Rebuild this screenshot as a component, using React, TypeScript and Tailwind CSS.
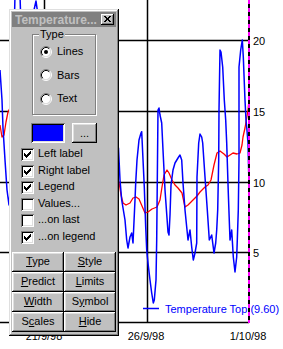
import React from "react";

const blue: [number, number][] = [
  [0, 70], [2, 100], [3, 128], [5, 160], [7, 190], [9, 205], [11, 180], [13, 80], [15, -5], [20, -5],
  [22, 60], [25, 150], [28, 200], [31, 120], [34, 10], [36, 1], [38, 15], [41, 120], [45, 230], [50, 260],
  [55, 200], [60, 120], [65, 160], [70, 240], [75, 280], [80, 230], [85, 150], [90, 100], [95, 140],
  [100, 210], [105, 260], [110, 230], [116, 175], [118.5, 148], [120, 180], [121.7, 200], [125, 220],
  [126.7, 240], [128, 248], [130, 237], [131.7, 233], [133, 243], [135, 200], [135.7, 183], [137, 160],
  [139, 140], [141, 133], [141.7, 131.7], [142.7, 153], [144.3, 187], [145.7, 227], [146.7, 250],
  [148, 263], [150, 280], [151.7, 293], [153.3, 303], [154.3, 300], [156, 280], [156.7, 240], [158, 110],
  [159, 108], [160, 115], [161.7, 123], [163, 150], [165, 190], [168, 232], [169, 235], [170, 215],
  [171, 185], [173, 170], [175, 163], [178, 158], [180, 155], [181.7, 160], [183, 183], [185, 210],
  [186.7, 227], [188, 240], [190, 230], [191.7, 247], [193.3, 260], [195, 253], [196.7, 243], [197, 177],
  [198.7, 143], [200, 134], [201.7, 137], [202.7, 143], [205, 177], [207.3, 210], [209.3, 240],
  [211.7, 235], [214, 253], [215.7, 243], [216.7, 230], [217.7, 210], [218.7, 160], [219, 110], [220, 50],
  [221, 52], [222.7, 67], [224.3, 100], [225.7, 120], [226.7, 143], [228.3, 193], [230, 240],
  [231.7, 230], [233.3, 257], [235, 272], [236.7, 257], [237.3, 240], [238.3, 210], [239, 160], [239, 67],
  [240.7, 50], [242.3, 40], [243.3, 57], [245, 100], [246, 120], [246.7, 127], [248, 143], [248.7, 173],
  [249, 182],
];

const red: [number, number][] = [
  [0, 125], [2, 137], [4, 135], [6, 122], [8, 112], [10, 108], [20, 125], [35, 115], [50, 150], [65, 160],
  [80, 140], [95, 170], [110, 175], [118, 180], [119, 182], [121, 195], [123, 203], [126, 205], [130, 203],
  [133, 198], [136, 197], [139, 199], [142, 206], [145, 213], [148, 212], [152, 209], [157, 207],
  [160, 200], [162, 187], [164, 175], [167, 170], [169, 173], [172, 180], [175, 185], [178, 188],
  [182, 193], [185, 207], [188, 205], [193, 200], [197, 196], [200, 192], [205, 187], [208, 185],
  [211, 180], [214, 165], [217, 153], [220, 151], [224, 154], [227, 157], [230, 155], [233, 153],
  [237, 154], [240, 153], [242, 145], [243, 137], [245, 128], [246, 122], [248, 110], [249, 100],
];

const pts = (p: [number, number][]) => p.map(([x, y]) => `${x},${y}`).join(" ");

function Chart() {
  const rows = [
    { y: 40, label: "20" },
    { y: 111, label: "15" },
    { y: 182, label: "10" },
    { y: 252, label: "5" },
  ];
  return (
    <svg width={283} height={349} className="block">
      <rect width={283} height={349} fill="#fff" />
      {rows.map((r) => (
        <line key={r.y} x1={0} x2={249} y1={r.y + 0.5} y2={r.y + 0.5} stroke="#000" strokeWidth={1.5} />
      ))}
      <line x1={0} x2={249} y1={322.5} y2={322.5} stroke="#000" strokeWidth={1.5} />
      <line x1={44.5} x2={44.5} y1={0} y2={322} stroke="#000" strokeWidth={1.5} />
      <line x1={147.5} x2={147.5} y1={0} y2={322} stroke="#000" strokeWidth={1.5} />
      <polyline points={pts(red)} fill="none" stroke="#ff0000" strokeWidth={1.3} strokeLinejoin="round" />
      <polyline points={pts(blue)} fill="none" stroke="#0000ff" strokeWidth={1.5} strokeLinejoin="round" />
      <line x1={143} x2={159} y1={308.5} y2={308.5} stroke="#0000ff" strokeWidth={1.5} />
      <text x={165} y={313} fontSize={11} fill="#0000ff">Temperature Top (9.60)</text>
      <g shapeRendering="crispEdges">
        <line x1={249} x2={249} y1={0} y2={323} stroke="#000" strokeWidth={2} />
        <line x1={249} x2={249} y1={0} y2={323} stroke="#ff00ff" strokeWidth={2} strokeDasharray="4 4" />
      </g>
      {rows.map((r) => (
        <text key={r.label} x={253} y={r.y + 4.5} fontSize={11} fill="#000">{r.label}</text>
      ))}
      <text x={44} y={340} fontSize={11} textAnchor="middle" fill="#000">21/9/98</text>
      <text x={146} y={340} fontSize={11} textAnchor="middle" fill="#000">26/9/98</text>
      <text x={248} y={340} fontSize={11} textAnchor="middle" fill="#000">1/10/98</text>
    </svg>
  );
}

function Radio({ label, checked }: { label: string; checked?: boolean }) {
  return (
    <div className="h-[23.5px] flex items-center pl-[7px] gap-[5px]">
      <svg width={12} height={12} className="shrink-0">
        <circle cx={6} cy={6} r={4.5} fill="#fff" />
        <path d="M2.11 9.89 A5.5 5.5 0 0 1 9.89 2.11" fill="none" stroke="#808080" />
        <path d="M9.89 2.11 A5.5 5.5 0 0 1 2.11 9.89" fill="none" stroke="#fff" />
        <path d="M2.82 9.18 A4.5 4.5 0 0 1 9.18 2.82" fill="none" stroke="#000" />
        <path d="M9.18 2.82 A4.5 4.5 0 0 1 2.82 9.18" fill="none" stroke="#dfdfdf" />
        {checked && <circle cx={6} cy={6} r={2} fill="#000" />}
      </svg>
      <span className="text-[11px] leading-[13px] text-black">{label}</span>
    </div>
  );
}

const CHECK = [
  [6, 0], [5, 1], [6, 1], [0, 2], [4, 2], [5, 2], [6, 2], [0, 3], [1, 3], [3, 3], [4, 3], [5, 3],
  [0, 4], [1, 4], [2, 4], [3, 4], [4, 4], [1, 5], [2, 5], [3, 5], [2, 6],
];

function Check({ label, checked }: { label: string; checked?: boolean }) {
  return (
    <div className="h-[16.6px] flex items-start gap-[4px]">
      <div className="w-[13px] h-[13px] shrink-0 bg-white shadow-[inset_1px_1px_0_#808080,inset_-1px_-1px_0_#fff,inset_2px_2px_0_#000,inset_-2px_-2px_0_#dfdfdf]">
        {checked && (
          <svg width={13} height={13} shapeRendering="crispEdges" className="block">
            {CHECK.map(([x, y]) => (
              <rect key={`${x}-${y}`} x={x + 3} y={y + 3} width={1} height={1} fill="#000" />
            ))}
          </svg>
        )}
      </div>
      <span className="text-[11px] leading-[11px] text-black whitespace-nowrap">{label}</span>
    </div>
  );
}

const CLOSE_X = [
  [0, 0], [1, 0], [5, 0], [6, 0], [1, 1], [2, 1], [4, 1], [5, 1], [2, 2], [3, 2], [4, 2],
  [2, 3], [3, 3], [4, 3], [1, 4], [2, 4], [4, 4], [5, 4], [0, 5], [1, 5], [5, 5], [6, 5],
];

function Btn({ children }: { children: React.ReactNode }) {
  return (
    <div className="h-[20px] flex items-center justify-center bg-[#c0c0c0] text-[11px] leading-none text-black shadow-[inset_-1px_-1px_0_#000,inset_1px_1px_0_#fff,inset_-2px_-2px_0_#808080,inset_2px_2px_0_#dfdfdf]">
      <span>{children}</span>
    </div>
  );
}

function Panel() {
  return (
    <div className="absolute left-[9px] top-[9px] w-[110px] h-[327px] bg-[#c0c0c0] p-[3px] flex flex-col shadow-[inset_-1px_-1px_0_#000,inset_1px_1px_0_#dfdfdf,inset_-2px_-2px_0_#808080,inset_2px_2px_0_#fff]">
      <div className="h-[15px] bg-[#808080] flex items-center pl-[3px] pr-[2px]">
        <span className="flex-1 text-[12px] font-bold leading-none text-[#c0c0c0] whitespace-nowrap overflow-hidden">
          Temperature...
        </span>
        <div className="w-[13px] h-[11px] bg-[#c0c0c0] shrink-0 shadow-[inset_-1px_-1px_0_#000,inset_1px_1px_0_#fff,inset_-2px_-2px_0_#808080]">
          <svg width={13} height={11} shapeRendering="crispEdges" className="block">
            {CLOSE_X.map(([x, y]) => (
              <rect key={`${x}-${y}`} x={x + 3} y={y + 2} width={1} height={1} fill="#000" />
            ))}
          </svg>
        </div>
      </div>

      <div className="relative ml-[20px] mt-[7px] w-[64px] h-[81px] border border-[#808080] shadow-[inset_1px_1px_0_#fff,1px_1px_0_#fff]">
        <span className="absolute left-[6px] top-[-7px] px-[1px] bg-[#c0c0c0] text-[11px] leading-[13px] text-black">
          Type
        </span>
        <div className="flex flex-col pt-[5px]">
          <Radio label="Lines" checked />
          <Radio label="Bars" />
          <Radio label="Text" />
        </div>
      </div>

      <div className="mt-[8px] ml-[19px] flex gap-[7px] h-[20px]">
        <div className="w-[34px] h-[20px] bg-[#0000ff] shadow-[inset_1px_1px_0_#808080,inset_-1px_-1px_0_#fff,inset_2px_2px_0_#000,inset_-2px_-2px_0_#dfdfdf]" />
        <div className="w-[25px] h-[20px] flex items-center justify-center text-[11px] leading-none text-black shadow-[inset_-1px_-1px_0_#000,inset_1px_1px_0_#fff,inset_-2px_-2px_0_#808080,inset_2px_2px_0_#dfdfdf]">
          ...
        </div>
      </div>

      <div className="mt-[5px] ml-[9px] flex flex-col">
        <Check label="Left label" checked />
        <Check label="Right label" checked />
        <Check label="Legend" checked />
        <Check label="Values..." />
        <Check label="...on last" />
        <Check label="...on legend" checked />
      </div>

      <div className="mt-[4px] grid grid-cols-2">
        <Btn><u>T</u>ype</Btn>
        <Btn><u>S</u>tyle</Btn>
        <Btn><u>P</u>redict</Btn>
        <Btn><u>L</u>imits</Btn>
        <Btn><u>W</u>idth</Btn>
        <Btn>S<u>y</u>mbol</Btn>
        <Btn>S<u>c</u>ales</Btn>
        <Btn><u>H</u>ide</Btn>
      </div>
    </div>
  );
}

export default function App() {
  return (
    <div className="relative w-[283px] h-[349px] overflow-hidden bg-white font-['Liberation_Sans',Arial,sans-serif]">
      <Chart />
      <Panel />
    </div>
  );
}
